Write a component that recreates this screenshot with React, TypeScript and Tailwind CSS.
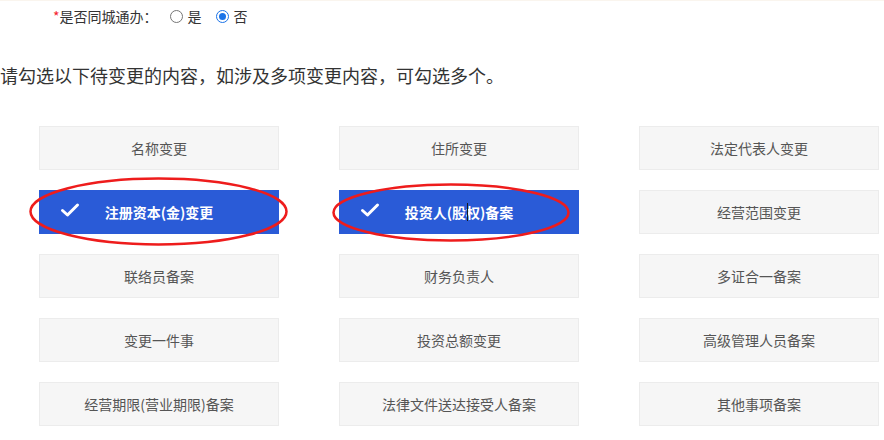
import React from "react";

type Ring = { left: number; top: number; w: number; h: number };
type Item = { label: string; checked?: boolean; cursor?: boolean; ring?: Ring };

const items: Item[] = [
  { label: "名称变更" },
  { label: "住所变更" },
  { label: "法定代表人变更" },
  {
    label: "注册资本(金)变更",
    checked: true,
    ring: { left: -10, top: -13, w: 259, h: 69 },
  },
  {
    label: "投资人(股权)备案",
    checked: true,
    cursor: true,
    ring: { left: -7, top: -7, w: 238, h: 59 },
  },
  { label: "经营范围变更" },
  { label: "联络员备案" },
  { label: "财务负责人" },
  { label: "多证合一备案" },
  { label: "变更一件事" },
  { label: "投资总额变更" },
  { label: "高级管理人员备案" },
  { label: "经营期限(营业期限)备案" },
  { label: "法律文件送达接受人备案" },
  { label: "其他事项备案" },
];

function Radio({ checked }: { checked?: boolean }) {
  return (
    <span
      className={`inline-flex size-[13px] items-center justify-center rounded-full border ${
        checked ? "border-[#1a73e8]" : "border-[#767676]"
      } bg-white`}
    >
      {checked && <span className="size-[7px] rounded-full bg-[#1a73e8]" />}
    </span>
  );
}

function ChangeButton({ item }: { item: Item }) {
  if (item.checked) {
    const ring = item.ring;
    return (
      <div className="relative flex h-[44px] items-center justify-center bg-[#2a5bd7] text-[14px] font-bold text-white">
        <svg
          className="absolute left-[21px] top-[12px]"
          width="20"
          height="16"
          viewBox="0 0 20 16"
        >
          <path
            d="M2.5 8.5 L7.5 13 L17.5 3"
            fill="none"
            stroke="white"
            strokeWidth="3"
            strokeLinecap="round"
            strokeLinejoin="round"
          />
        </svg>
        <span className="relative">
          {item.label}
          {item.cursor && (
            <span className="absolute left-[62px] top-[1px] h-[18px] w-px bg-[#1a1a1a]" />
          )}
        </span>
        {ring && (
          <svg
            className="pointer-events-none absolute"
            style={{ left: ring.left, top: ring.top }}
            width={ring.w}
            height={ring.h}
            viewBox={`0 0 ${ring.w} ${ring.h}`}
          >
            <ellipse
              cx={ring.w / 2}
              cy={ring.h / 2}
              rx={ring.w / 2 - 1.5}
              ry={ring.h / 2 - 1.5}
              fill="none"
              stroke="#ee1c1c"
              strokeWidth="2.5"
            />
          </svg>
        )}
      </div>
    );
  }
  return (
    <div className="flex h-[44px] items-center justify-center border border-[#ececec] bg-[#f6f6f6] text-[14px] text-[#555]">
      {item.label}
    </div>
  );
}

export default function App() {
  return (
    <div
      className="h-[440px] w-[884px] overflow-hidden bg-white text-[#333]"
      style={{ fontFamily: '"Noto Sans CJK SC", "Noto Sans", sans-serif' }}
    >
      <div className="h-px bg-[#faf5ee]" />
      <div className="flex h-[31px] items-center pl-[53px] text-[14px]">
        <span className="text-[#f5222d]">*</span>
        <span>是否同城通办：</span>
        <span className="ml-[12px] flex items-center gap-[5px]">
          <Radio />
          <span>是</span>
        </span>
        <span className="ml-[14px] flex items-center gap-[5px]">
          <Radio checked />
          <span>否</span>
        </span>
      </div>
      <div className="mt-[29px] h-[28px] text-[18px] leading-[28px] text-[#333]">
        请勾选以下待变更的内容，如涉及多项变更内容，可勾选多个。
      </div>
      <div className="ml-[39px] mt-[37px] grid w-[840px] grid-cols-[240px_240px_240px] gap-x-[60px] gap-y-[20px]">
        {items.map((item) => (
          <ChangeButton key={item.label} item={item} />
        ))}
      </div>
    </div>
  );
}
